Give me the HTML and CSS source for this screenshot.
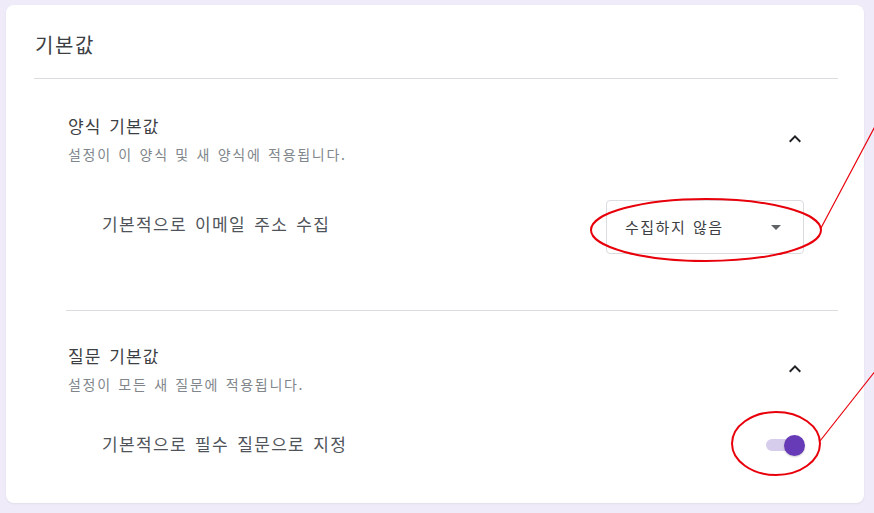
FILE: index.html
```html
<!DOCTYPE html>
<html lang="ko">
<head>
<meta charset="utf-8">
<title>기본값</title>
<link rel="stylesheet" href="styles.css">
</head>
<body>
<div class="card">
  <div class="card-title">기본값</div>

  <section class="group first">
    <div class="group-head">
      <div class="group-text">
        <div class="group-title">양식 기본값</div>
        <div class="group-sub">설정이 이 양식 및 새 양식에 적용됩니다.</div>
      </div>
      <svg class="chevron" viewBox="0 0 24 24" width="24" height="24"><path d="M12 8l-6 6 1.41 1.41L12 10.83l4.59 4.58L18 14z"/></svg>
    </div>
    <div class="row row-select">
      <div class="row-label">기본적으로 이메일 주소 수집</div>
      <div class="select">
        <span class="select-text">수집하지 않음</span>
        <span class="select-arrow"></span>
      </div>
    </div>
  </section>

  <section class="group second">
    <div class="group-head">
      <div class="group-text">
        <div class="group-title">질문 기본값</div>
        <div class="group-sub">설정이 모든 새 질문에 적용됩니다.</div>
      </div>
      <svg class="chevron" viewBox="0 0 24 24" width="24" height="24"><path d="M12 8l-6 6 1.41 1.41L12 10.83l4.59 4.58L18 14z"/></svg>
    </div>
    <div class="row row-toggle">
      <div class="row-label">기본적으로 필수 질문으로 지정</div>
      <div class="toggle"><span class="track"></span><span class="thumb"></span></div>
    </div>
  </section>
</div>

<svg class="annotations" width="874" height="513" viewBox="0 0 874 513">
  <ellipse cx="706" cy="230" rx="115" ry="31" fill="none" stroke="#e8000b" stroke-width="2"/>
  <line x1="821" y1="228" x2="880" y2="117" stroke="#e8000b" stroke-width="1.2"/>
  <ellipse cx="776" cy="443.5" rx="44" ry="31.5" fill="none" stroke="#e8000b" stroke-width="2"/>
  <line x1="820" y1="441" x2="880" y2="365" stroke="#e8000b" stroke-width="1.2"/>
</svg>
</body>
</html>
```

FILE: styles.css
```css
html, body {
  margin: 0;
  padding: 0;
}
body {
  background: #efebf8;
  font-family: "Noto Sans CJK KR", "Noto Sans", sans-serif;
  color: #202124;
  width: 874px;
  height: 513px;
  overflow: hidden;
  position: relative;
  padding: 5px 10px 10px 6px;
  box-sizing: border-box;
}
.card {
  background: #ffffff;
  border-radius: 8px;
  height: 498px;
  width: 858px;
  box-sizing: border-box;
  padding: 0 26px 0 28px;
  box-shadow: 0 1px 2px rgba(60, 64, 67, 0.08);
}
.card-title {
  font-size: 20px;
  line-height: 24px;
  letter-spacing: 1.6px;
  color: #3c4043;
  padding: 28px 0 21px 1px;
  border-bottom: 1px solid #dadce0;
}
.group {
  margin-left: 32px;
}
.group.first {
  padding-top: 35px;
  padding-bottom: 56px;
  border-bottom: 1px solid #dadce0;
}
.group.second {
  padding-top: 33px;
}
.group-head {
  display: flex;
  align-items: center;
  justify-content: space-between;
  padding-right: 31px;
}
.group-text {
  padding-left: 2px;
}
.group-title {
  font-size: 17px;
  line-height: 24px;
  letter-spacing: 1.1px;
  word-spacing: 2px;
  color: #3c4043;
}
.group-sub {
  font-size: 14px;
  line-height: 20px;
  margin-top: 6px;
  letter-spacing: 1.7px;
  word-spacing: 1px;
  color: #80868b;
}
.chevron {
  fill: #202124;
  display: block;
}
.row {
  display: flex;
  justify-content: space-between;
  margin-left: 36px;
}
.row-select {
  margin-top: 36px;
  align-items: flex-start;
  padding-right: 34px;
}
.row-select .row-label {
  margin-top: 12px;
}
.row-label {
  font-size: 17px;
  line-height: 24px;
  letter-spacing: 1.35px;
  word-spacing: 2px;
  color: #50545a;
}
.select {
  width: 198px;
  height: 54px;
  box-sizing: border-box;
  border: 1px solid #dadce0;
  border-radius: 4px;
  display: flex;
  align-items: center;
  justify-content: space-between;
  padding: 0 22px 2px 18px;
}
.select-text {
  font-size: 15px;
  letter-spacing: 1.5px;
  word-spacing: 1px;
  color: #3c4043;
}
.select-arrow {
  width: 0;
  height: 0;
  border-left: 5px solid transparent;
  border-right: 5px solid transparent;
  border-top: 5px solid #5f6368;
  margin-top: 2px;
}
.row-toggle {
  margin-top: 38px;
  align-items: center;
  padding-right: 33px;
}
.toggle {
  position: relative;
  width: 40px;
  height: 24px;
}
.track {
  position: absolute;
  left: 1px;
  top: 7px;
  width: 36px;
  height: 12px;
  border-radius: 6px;
  background: #d6cdec;
}
.thumb {
  position: absolute;
  right: 0;
  top: 3px;
  width: 21px;
  height: 21px;
  border-radius: 50%;
  background: #673ab7;
  box-shadow: 0 1px 2px rgba(0, 0, 0, 0.2);
}
.annotations {
  position: absolute;
  left: 0;
  top: 0;
  pointer-events: none;
}
```
